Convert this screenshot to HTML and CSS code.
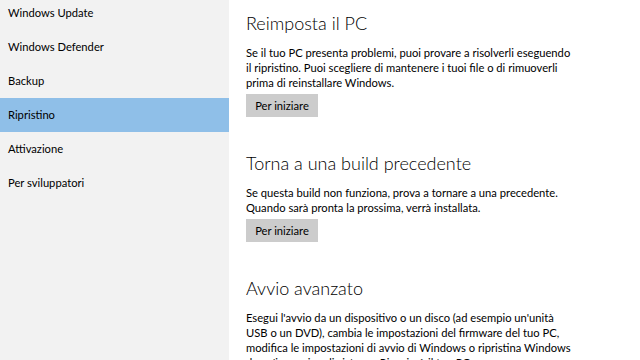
FILE: index.html
```html
<!DOCTYPE html>
<html lang="it">
<head>
    <meta charset="UTF-8">
    <meta name="viewport" content="width=device-width, initial-scale=1.0">
    <title>Ripristino</title>
    <link rel="stylesheet" href="styles.css">
</head>
<body>
    <div class="finestra">
        <!-- Menu laterale -->
        <nav class="menu">
            <ul>
                <li>Windows Update</li>
                <li>Windows Defender</li>
                <li>Backup</li>
                <li class="attivo">Ripristino</li>
                <li>Attivazione</li>
                <li>Per sviluppatori</li>
            </ul>
        </nav>

        <!-- Contenuto -->
        <main class="contenuto">
            <section class="sezione">
                <h2>Reimposta il PC</h2>
                <p>Se il tuo PC presenta problemi, puoi provare a risolverli eseguendo<br>
                il ripristino. Puoi scegliere di mantenere i tuoi file o di rimuoverli<br>
                prima di reinstallare Windows.</p>
                <button>Per iniziare</button>
            </section>
            <section class="sezione">
                <h2>Torna a una build precedente</h2>
                <p>Se questa build non funziona, prova a tornare a una precedente.<br>
                Quando sarà pronta la prossima, verrà installata.</p>
                <button>Per iniziare</button>
            </section>
            <section class="sezione">
                <h2>Avvio avanzato</h2>
                <p>Esegui l'avvio da un dispositivo o un disco (ad esempio un'unità<br>
                USB o un DVD), cambia le impostazioni del firmware del tuo PC,<br>
                modifica le impostazioni di avvio di Windows o ripristina Windows<br>
                da un'immagine di sistema. Riavvierò il tuo PC.</p>
            </section>
        </main>
    </div>
</body>
</html>
```

FILE: styles.css
```css
/* Stile generale */
body {
    margin: 0;
    font-family: 'Lato', 'Open Sans', sans-serif;
    color: #000;
    background-color: #fff;
    overflow: hidden;
}

.finestra {
    display: flex;
    height: 360px;
    overflow: hidden;
}

/* Menu laterale */
.menu {
    width: 229px;
    flex-shrink: 0;
    background-color: #f2f2f2;
}

.menu ul {
    list-style: none;
    margin: -4px 0 0 0;
    padding: 0;
}

.menu li {
    height: 34px;
    line-height: 34px;
    padding-left: 8px;
    font-size: 11.2px;
    color: #000;
}

.menu li.attivo {
    background-color: #8fbfe8;
}

/* Contenuto */
.contenuto {
    padding: 11px 0 0 17px;
    width: 360px;
}

.sezione {
    margin-bottom: 34px;
}

h2 {
    margin: 0;
    font-size: 18px;
    font-weight: 300;
    line-height: 24px;
    color: #000;
}

p {
    margin: 10px 0 0 0;
    font-size: 11.2px;
    line-height: 15px;
    color: #000;
}

button {
    margin-top: 4px;
    width: 72px;
    height: 23px;
    padding: 0;
    border: none;
    background-color: #cccccc;
    font-family: inherit;
    font-size: 11.2px;
    color: #000;
}
```
